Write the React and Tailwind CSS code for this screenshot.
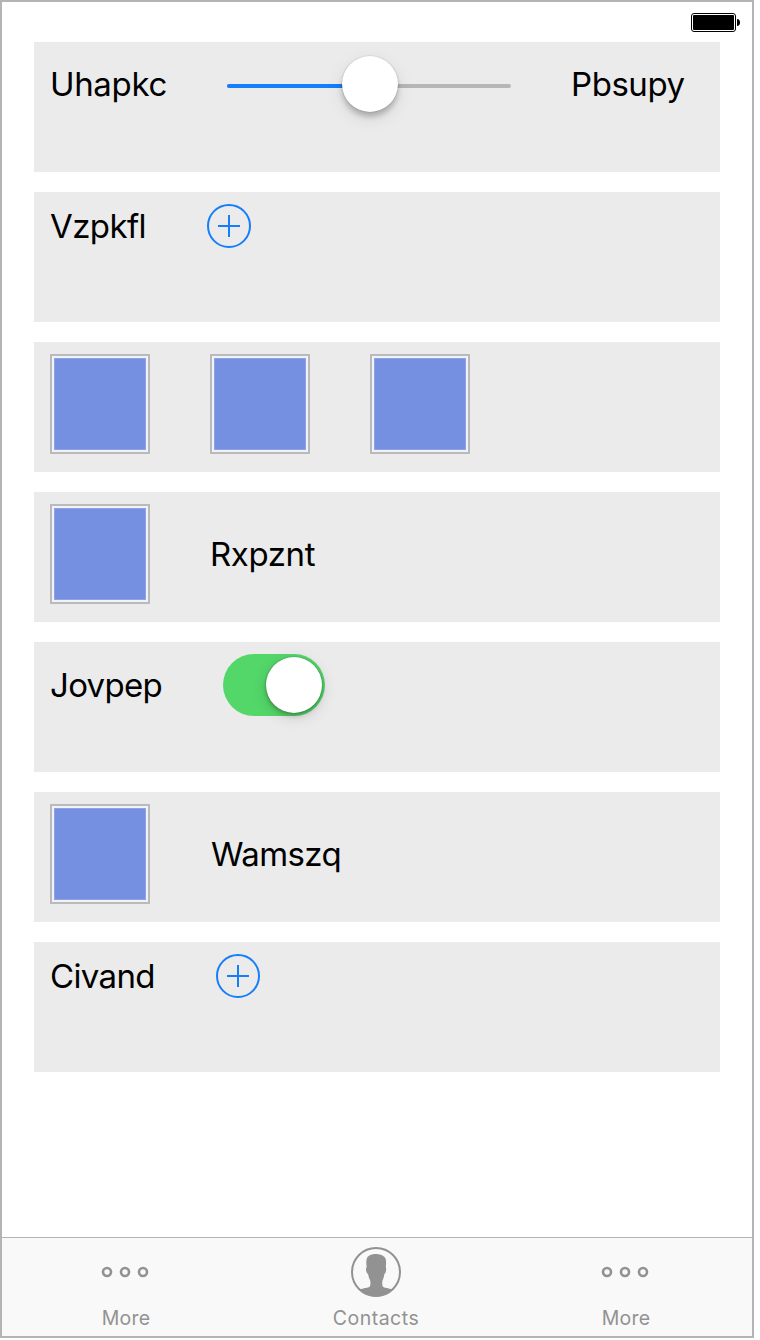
import React from 'react';

function Row({ height, children }) {
  return (
    <div className="h-[130px] w-[686px] bg-[#ebebeb] pl-4 pt-3">
      <div className={`flex items-center gap-[60px] ${height}`}>{children}</div>
    </div>
  );
}

function Label({ className, children }) {
  return (
    <span className={`shrink-0 whitespace-nowrap text-[33px] leading-[40px] text-black ${className}`}>
      {children}
    </span>
  );
}

function Slider() {
  return (
    <div className="relative flex h-[60px] w-[284px] shrink-0 items-center pt-1">
      <div className="flex h-1 w-full overflow-hidden rounded-full bg-[#b6b6b6]">
        <div className="h-full w-1/2 bg-[#147efb]" />
      </div>
      <div className="absolute left-[115px] top-[2px] size-14 rounded-full bg-white shadow-[0_0_1px_0.5px_rgba(0,0,0,0.13),0_5px_5px_rgba(0,0,0,0.2),0_6px_18px_rgba(0,0,0,0.1)]" />
    </div>
  );
}

function AddButton() {
  return (
    <button className="size-11 shrink-0" aria-label="Add">
      <svg viewBox="0 0 44 44" className="size-11" fill="none" stroke="#147efb" strokeWidth="2">
        <circle cx="22" cy="22" r="21" />
        <path d="M11 22H33M22 11V33" />
      </svg>
    </button>
  );
}

function Swatch() {
  return (
    <div className="size-[100px] shrink-0 border-2 border-[#bababa] bg-[#f0f3fb] p-[2px]">
      <div className="size-full border border-[#8ea2e5] bg-[#758fe1]" />
    </div>
  );
}

function Toggle() {
  return (
    <div className="flex h-[62px] w-[102px] shrink-0 items-center justify-end rounded-full bg-[#53d769] pr-[3px]">
      <div className="size-14 rounded-full bg-white shadow-[0_0_2px_rgba(0,0,0,0.3),0_3px_4px_rgba(0,0,0,0.2),0_4px_16px_rgba(0,0,0,0.14)]" />
    </div>
  );
}

function MoreIcon() {
  return (
    <svg viewBox="0 0 50 50" className="size-[50px]" fill="none" stroke="#929292" strokeWidth="2.6">
      <circle cx="6" cy="25" r="4" />
      <circle cx="24" cy="25" r="4" />
      <circle cx="42" cy="25" r="4" />
    </svg>
  );
}

function ContactsIcon() {
  return (
    <svg viewBox="0 0 50 50" className="size-[50px]">
      <circle cx="25" cy="25" r="24" fill="none" stroke="#929292" strokeWidth="2" />
      <path
        fill="#929292"
        d="M9 42.5C12 41.2 17.5 41 18.8 39.5C19.6 38 19.6 35.5 19.2 33.5C18.2 31.5 17.5 29.5 17.1 27C15.6 26.5 14.8 23.5 15 21.5C15.1 20.7 15.7 20.6 15.7 20.3C15.2 17 15 13.5 16 11C17.3 8.3 21 7 25.2 7C28.5 7 31.5 8 32.8 9.5C35.5 11 35.3 15 34.8 20.3C35.5 20.8 35.3 26 33.4 27C33 29.5 32.5 31.5 31.5 33.5C31.1 35.5 31.1 38 31.8 39.5C33 41 38 41.2 41 42.5C37 47 31.5 49.5 25 49.5C18.5 49.5 13 47 9 42.5Z"
      />
    </svg>
  );
}

function Tab({ icon, label, className }) {
  return (
    <div className="flex w-[250px] flex-col items-center pr-0.5 pt-[9px] text-[#929292]">
      {icon}
      <span className={`mt-[9px] text-[19.5px] leading-6 ${className}`}>{label}</span>
    </div>
  );
}

export default function App() {
  return (
    <div className="h-[1340px] w-[760px] bg-white font-['Inter',sans-serif]">
      <div className="flex h-[1338px] w-[754px] flex-col border-2 border-[#b4b4b4] bg-white">
        <header className="flex h-10 shrink-0 justify-end pr-3 pt-[11px]">
          <svg width="49" height="19" viewBox="0 0 49 19">
            <rect x="0.5" y="0.5" width="44" height="18" rx="2.5" fill="white" stroke="black" />
            <rect x="2" y="2" width="41" height="15" rx="1" fill="black" />
            <path d="M46 6C48 6 49 7.3 49 9.5S48 13 46 13Z" fill="black" />
          </svg>
        </header>
        <main className="flex flex-1 flex-col gap-5 pl-8">
          <Row height="h-[60px]">
            <Label className="w-[117px] tracking-[-0.35px]">Uhapkc</Label>
            <Slider />
            <Label className="tracking-[-0.45px]">Pbsupy</Label>
          </Row>
          <Row height="h-11">
            <Label className="w-[97px] tracking-[-0.6px]">Vzpkfl</Label>
            <AddButton />
          </Row>
          <Row height="h-[100px]">
            <Swatch />
            <Swatch />
            <Swatch />
          </Row>
          <Row height="h-[100px]">
            <Swatch />
            <Label className="tracking-[-0.4px]">Rxpznt</Label>
          </Row>
          <Row height="h-[62px]">
            <Label className="w-[113px] tracking-[-0.7px]">Jovpep</Label>
            <Toggle />
          </Row>
          <Row height="h-[100px]">
            <Swatch />
            <Label className="pl-px tracking-[-0.6px]">Wamszq</Label>
          </Row>
          <Row height="h-11">
            <Label className="w-[106px] tracking-[-0.65px]">Civand</Label>
            <AddButton />
          </Row>
        </main>
        <nav className="flex h-[99px] shrink-0 border-t border-[#b2b2b2] bg-[#f9f9f9]">
          <Tab icon={<MoreIcon />} label="More" className="tracking-[0.2px]" />
          <Tab icon={<ContactsIcon />} label="Contacts" className="tracking-[0.5px]" />
          <Tab icon={<MoreIcon />} label="More" className="tracking-[0.2px]" />
        </nav>
      </div>
    </div>
  );
}
